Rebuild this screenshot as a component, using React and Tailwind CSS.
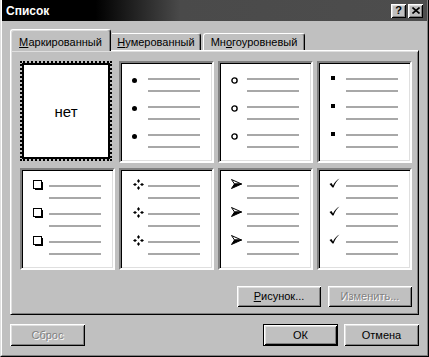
import React from 'react';

const raised =
  'shadow-[inset_1px_1px_#fff,inset_-1px_-1px_#000,inset_2px_2px_#dfdfdf,inset_-2px_-2px_#808080]';

const Line = () => <div className="h-[2px] w-[52px] bg-[#a8a8a8]" />;

const Dot = () => <div className="ml-[11px] w-[5px] h-[5px] rounded-full bg-black" />;

const Circle = () => (
  <svg className="ml-[11px] -mt-[1px]" width="7" height="7" viewBox="0 0 7 7">
    <circle cx="3.5" cy="3.5" r="2.6" fill="none" stroke="#000" strokeWidth="1.4" />
  </svg>
);

const Square = () => <div className="ml-[12px] -mt-[2px] w-[4px] h-[4px] bg-black" />;

const Box = () => (
  <svg className="ml-[11px] -mt-[5px]" width="10" height="10" viewBox="0 0 10 10">
    <rect x="0.5" y="0.5" width="8" height="8" fill="#fff" stroke="#000" />
    <path d="M2 9.25H9.25V2" fill="none" stroke="#000" strokeWidth="1.5" />
  </svg>
);

const Cross = () => (
  <svg className="ml-[12px] -mt-[6px]" width="11" height="11" viewBox="0 0 11 11">
    <path d="M5.5 0L7 2L5.5 4L4 2Z" fill="#000" />
    <path d="M5.5 7L7 9L5.5 11L4 9Z" fill="#000" />
    <path d="M0 5.5L2 4L4 5.5L2 7Z" fill="#000" />
    <path d="M7 5.5L9 4L11 5.5L9 7Z" fill="#000" />
  </svg>
);

const Arrow = () => (
  <svg className="ml-[11px] -mt-[6px]" width="11" height="10" viewBox="0 0 11 10">
    <path d="M0.5 0.5L10.5 5L3.5 5Z" fill="#fff" stroke="#000" strokeWidth="1" strokeLinejoin="round" />
    <path d="M3.5 5L10.5 5L0.5 9.5Z" fill="#000" stroke="#000" strokeWidth="1" strokeLinejoin="round" />
  </svg>
);

const Check = () => (
  <svg className="ml-[10px] -mt-[7px]" width="11" height="10" viewBox="0 0 11 10">
    <path d="M0.5 6L2.5 5L4 7.5C5.5 4.5 7.5 2 10.5 0.5C8 2.5 6 5.5 4.5 9.5L3.5 9.5Z" fill="#000" />
  </svg>
);

const BulletCell = ({ bullet }) => (
  <div className="h-[102px] bg-white border-2 border-t-[#808080] border-l-[#808080] border-r-white border-b-white shadow-[inset_1px_1px_#000,inset_-1px_-1px_#dfdfdf] pt-[15px] flex flex-col gap-[14px]">
    {[0, 1, 2].map((i) => (
      <div key={i} className="flex">
        <div className="w-[27px]">{bullet}</div>
        <div className="flex flex-col gap-[10px]">
          <Line />
          <Line />
        </div>
      </div>
    ))}
  </div>
);

const Button = ({ children, disabled, isDefault, className = '' }) => (
  <button
    className={`bg-[#c0c0c0] text-[11px] flex items-center justify-center ${raised} ${
      isDefault ? 'border border-black' : ''
    } ${disabled ? 'text-[#808080] [text-shadow:1px_1px_0_#fff]' : 'text-black'} ${className}`}
  >
    {children}
  </button>
);

export default function App() {
  return (
    <div className="w-[429px] h-[357px] bg-[#c0c0c0] border-l border-r border-b border-l-[#dfdfdf] border-r-black border-b-black font-['Liberation_Sans',Arial,sans-serif] select-none">
      <div className="h-full border-l border-r border-b border-l-white border-r-[#808080] border-b-[#808080] flex flex-col">
        {/* Title bar */}
        <div className="h-[21px] flex items-center justify-between pl-[4px] pr-[4px] bg-[linear-gradient(to_right,#000_0%,#000_22%,#4a4a4a_42%,#4d4d4d_100%)]">
          <span className="text-white font-bold text-[12px] leading-none">Список</span>
          <div className="flex gap-[2px]">
            <div className={`w-[15px] h-[14px] bg-[#c0c0c0] flex items-center justify-center text-[11px] font-bold leading-none ${raised}`}>
              ?
            </div>
            <div className={`w-[15px] h-[14px] bg-[#c0c0c0] flex items-center justify-center ${raised}`}>
              <svg width="8" height="7" viewBox="0 0 8 7">
                <path d="M0.5 0.5L7.5 6.5M7.5 0.5L0.5 6.5" stroke="#000" strokeWidth="1.6" />
              </svg>
            </div>
          </div>
        </div>

        <div className="px-[8px] flex flex-col">
          {/* Tabs */}
          <div className="mt-[8px] h-[21px] flex items-end text-[11px]">
            <div className="relative z-10 -mb-[1px] w-[101px] h-[22px] pt-[3px] bg-[#c0c0c0] border-l border-t border-r border-l-white border-t-white border-r-black rounded-t-[3px] shadow-[inset_-1px_0_#808080,inset_1px_1px_#dfdfdf] flex items-center justify-center">
              <span><span className="underline">М</span>аркированный</span>
            </div>
            <div className="ml-[1px] w-[89px] h-[17px] pt-[1px] border-t border-r border-t-white border-r-black rounded-tr-[3px] shadow-[inset_-1px_0_#808080] flex items-center justify-center">
              <span><span className="underline">Н</span>умерованный</span>
            </div>
            <div className="ml-[2px] w-[102px] h-[17px] pt-[1px] border-l border-t border-r border-l-white border-t-white border-r-black rounded-t-[3px] shadow-[inset_-1px_0_#808080] flex items-center justify-center">
              <span>Мн<span className="underline">о</span>гоуровневый</span>
            </div>
          </div>

          {/* Panel */}
          <div className="h-[265px] border border-t-white border-l-white border-r-black border-b-black shadow-[inset_1px_1px_#dfdfdf,inset_-1px_-1px_#808080] pl-[9px] pr-[6px] pt-[10px] flex flex-col">
            <div className="grid grid-cols-[repeat(4,95px)] gap-x-[4px] gap-y-[5px]">
              <div className="w-[92px] h-[100px] border-2 border-dotted border-black">
                <div className="h-full border-2 border-black bg-white flex items-center justify-center text-[15px] pt-[2px]">
                  нет
                </div>
              </div>
              <BulletCell bullet={<Dot />} />
              <BulletCell bullet={<Circle />} />
              <BulletCell bullet={<Square />} />
              <BulletCell bullet={<Box />} />
              <BulletCell bullet={<Cross />} />
              <BulletCell bullet={<Arrow />} />
              <BulletCell bullet={<Check />} />
            </div>

            <div className="mt-[16px] flex justify-end gap-[7px]">
              <Button className="w-[84px] h-[21px]">
                <span><span className="underline">Р</span>исунок...</span>
              </Button>
              <Button disabled className="w-[84px] h-[21px]">
                Изменить...
              </Button>
            </div>
          </div>

          {/* Bottom buttons */}
          <div className="mt-[9px] flex items-center">
            <Button disabled className="w-[75px] h-[22px]">
              Сброс
            </Button>
            <div className="ml-auto flex gap-[6px]">
              <Button isDefault className="w-[75px] h-[22px]">
                ОК
              </Button>
              <Button className="w-[75px] h-[22px]">Отмена</Button>
            </div>
          </div>
        </div>
      </div>
    </div>
  );
}
